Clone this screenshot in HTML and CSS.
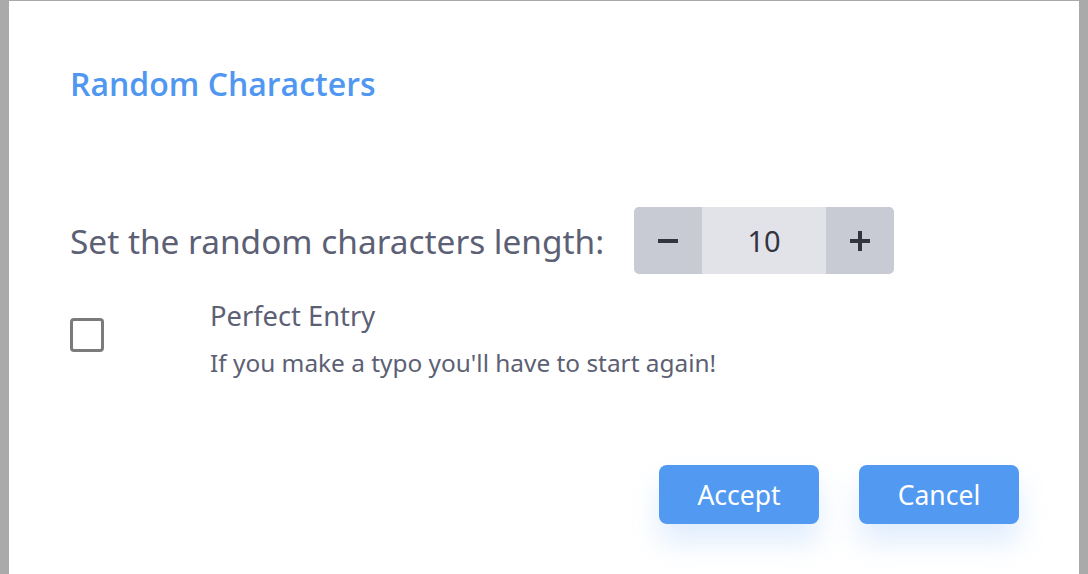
FILE: index.html
```html
<!DOCTYPE html>
<html>
<head>
<meta charset="utf-8">
<link rel="stylesheet" href="styles.css">
</head>
<body>
<div class="dialog">
  <h1 class="title">Random Characters</h1>
  <div class="length-row">
    <span class="length-label">Set the random characters length:</span>
    <div class="stepper">
      <button class="step-btn" aria-label="decrease">
        <svg width="20" height="20" viewBox="0 0 20 20"><rect x="0" y="8" width="20" height="4" fill="#33343f"/></svg>
      </button>
      <div class="step-value">10</div>
      <button class="step-btn" aria-label="increase">
        <svg width="20" height="20" viewBox="0 0 20 20"><rect x="0" y="8" width="20" height="4" fill="#33343f"/><rect x="8" y="0" width="4" height="20" fill="#33343f"/></svg>
      </button>
    </div>
  </div>
  <div class="option-row">
    <span class="checkbox"></span>
    <div class="option-text">
      <div class="option-title">Perfect Entry</div>
      <div class="option-desc">If you make a typo you'll have to start again!</div>
    </div>
  </div>
  <div class="actions">
    <button class="action-btn">Accept</button>
    <button class="action-btn">Cancel</button>
  </div>
</div>
</body>
</html>
```
FILE: styles.css
```css
html, body {
  margin: 0;
  padding: 0;
  height: 100%;
  overflow: hidden;
}
body {
  background: #aaaaaa;
  padding-top: 1px;
  box-sizing: border-box;
  font-family: "Noto Sans", "Open Sans", sans-serif;
}
.dialog {
  margin-left: 9px;
  width: 1070px;
  height: 573px;
  background: #ffffff;
  box-sizing: border-box;
  padding: 0 60px 0 61px;
  display: flex;
  flex-direction: column;
}
.title {
  margin: 63px 0 0 0;
  font-family: "Open Sans", sans-serif;
  font-weight: 600;
  font-size: 32px;
  line-height: 40px;
  color: #4f97f0;
}
.length-row {
  margin-top: 103px;
  display: flex;
  align-items: center;
  gap: 30px;
}
.length-label {
  font-size: 33.4px;
  color: #5c6074;
}
.stepper {
  display: flex;
  height: 67px;
  border-radius: 5px;
  overflow: hidden;
}
.step-btn {
  width: 68px;
  border: 0;
  padding: 0;
  background: #c8cad4;
  display: flex;
  align-items: center;
  justify-content: center;
}
.step-value {
  width: 124px;
  background: #e2e3e9;
  display: flex;
  align-items: center;
  justify-content: center;
  font-size: 29px;
  color: #33343f;
}
.option-row {
  margin-top: 24px;
  display: flex;
  align-items: flex-start;
}
.checkbox {
  margin-top: 20px;
  width: 34px;
  height: 34px;
  box-sizing: border-box;
  border: 3px solid #7b7b7b;
  border-radius: 4px;
  flex: none;
}
.option-text {
  margin-left: 106px;
}
.option-title {
  font-size: 27.3px;
  line-height: 36px;
  color: #5c6074;
}
.option-desc {
  margin-top: 13px;
  font-size: 24.4px;
  line-height: 32px;
  color: #5c6074;
}
.actions {
  margin-top: 86px;
  display: flex;
  justify-content: flex-end;
  gap: 40px;
}
.action-btn {
  width: 160px;
  height: 59px;
  border: 0;
  border-radius: 8px;
  background: #5299f2;
  color: #ffffff;
  font-family: "Noto Sans", "Open Sans", sans-serif;
  font-size: 26.5px;
  box-shadow: 0 18px 28px rgba(82, 153, 242, 0.18);
}
```
